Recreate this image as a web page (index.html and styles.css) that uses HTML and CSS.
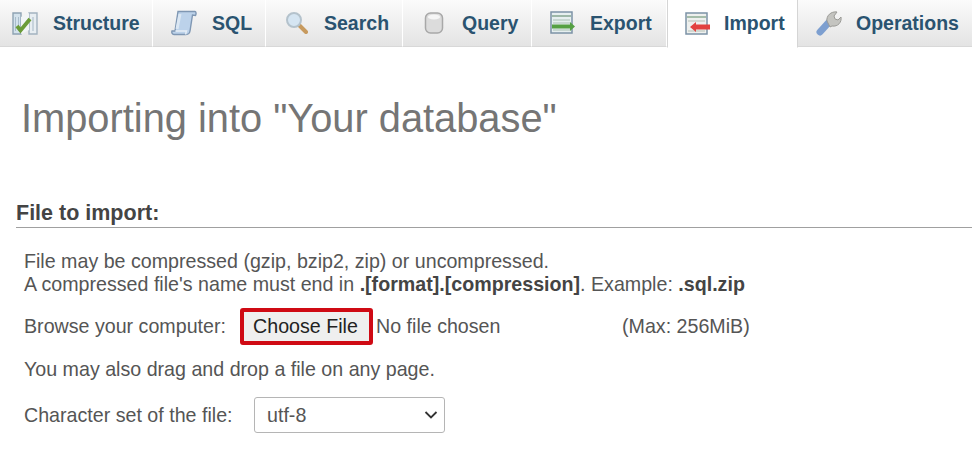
FILE: index.html
```html
<!DOCTYPE html>
<html lang="en">
<head>
    <meta charset="UTF-8">
    <title>Import</title>
    <link rel="stylesheet" href="styles.css">
</head>
<body>
    <ul class="tabs">
        <li class="tab tab-structure"><svg class="icon" viewBox="0 0 26 24">
            <path d="M1 2h8v21H1z" fill="#d3e2ec" stroke="#8ea3b3" stroke-width="1.400"/>
            <path d="M3.500 6v14M6.500 6v14" stroke="#a8bccb" stroke-width="1"/>
            <path d="M17 2h8v21h-8z" fill="#e8eef2" stroke="#a3b3c0" stroke-width="1.400"/>
            <path d="M21 6v14" stroke="#bccad4" stroke-width="1.500"/>
            <path d="M9 6l8-4v17l-8 4z" fill="#f2f5f6"/>
            <path d="M5 15l3.500 4.500L18 8" fill="none" stroke="#6b9c38" stroke-width="3.800"/>
        </svg>Structure</li>
        <li class="tab tab-sql"><svg class="icon" viewBox="0 0 26 26">
            <path d="M7 1.500h17c1 0 1.500 2 .5 4l-3-.5-2.500 16c-.3 2-1.500 3.500-4 3.500H3c-2 0-2.500-2-2-3.500h3z" fill="#bcd2ea" stroke="#7f97b3" stroke-width="1.400"/>
            <path d="M4.500 21h11c-.5 1-.5 2.500-1 3.500" fill="none" stroke="#e6eef6" stroke-width="1.400"/>
            <path d="M9 4l-3 15" fill="none" stroke="#dbe7f3" stroke-width="3"/>
        </svg>SQL</li>
        <li class="tab tab-search"><svg class="icon" viewBox="0 0 24 24">
            <path d="M14 14l7 7" stroke="#c79a5e" stroke-width="4" stroke-linecap="round"/>
            <circle cx="9" cy="9" r="7" fill="#d5e5f2" stroke="#b4c2cc" stroke-width="2"/>
        </svg>Search</li>
        <li class="tab tab-query"><svg class="icon" viewBox="0 0 20 24">
            <rect x="1.500" y="2" width="17" height="20" rx="5" fill="#dcdcdc" stroke="#a8a8a8" stroke-width="1.500"/>
            <ellipse cx="10" cy="6" rx="6" ry="2.500" fill="#f6f6f6"/>
        </svg>Query</li>
        <li class="tab tab-export"><svg class="icon" viewBox="0 0 26 24">
            <rect x="1" y="1" width="21" height="21" fill="#e6eff0" stroke="#7c93a6" stroke-width="1.500"/>
            <path d="M2 5h19" stroke="#9db8a8" stroke-width="2"/>
            <path d="M3 9h17M3 12h17M3 19h17" stroke="#a8bfb2" fill="none"/>
            <path d="M2 13.500h18V11l5 4.500-5 4.500v-2.500H2z" fill="#55a043"/>
        </svg>Export</li>
        <li class="tab tab-import active"><svg class="icon" viewBox="0 0 26 24">
            <rect x="1" y="1" width="21" height="21" fill="#eef0ee" stroke="#7c93a6" stroke-width="1.500"/>
            <path d="M2 5h19" stroke="#a5bdaa" stroke-width="2"/>
            <path d="M3 9h17M3 19h17" stroke="#b5c0b5" fill="none"/>
            <path d="M25 12.500H11V10l-6 5 6 5v-2.500h14z" fill="#e2423f"/>
        </svg>Import</li>
        <li class="tab tab-operations"><svg class="icon" viewBox="0 0 26 26">
            <path d="M4 22L14 11" stroke="#7d9fd0" stroke-width="7" stroke-linecap="round"/>
            <path d="M11 11c-1-5 4-10 10-9l-3 4 1 3 3 1 3-3c1 5-3 10-9 9l-2 1z" fill="#c4c4c0" stroke="#9a9a96"/>
        </svg>Operations</li>
    </ul>

    <h1 class="title">Importing into "Your database"</h1>

    <h2 class="section-title">File to import:</h2>

    <div class="section-body">
        <p class="hint">File may be compressed (gzip, bzip2, zip) or uncompressed.<br>
        A compressed file's name must end in <b>.[format].[compression]</b>. Example: <b>.sql.zip</b></p>

        <div class="row browse-row">
            <span class="browse-label">Browse your computer:</span>
            <span class="file-btn">Choose File</span>
            <span class="file-name">No file chosen</span>
            <span class="max-size">(Max: 256MiB)</span>
        </div>

        <p class="drag-note">You may also drag and drop a file on any page.</p>

        <div class="row charset-row">
            <span class="charset-label">Character set of the file:</span>
            <span class="select">utf-8
                <svg class="chevron" viewBox="0 0 14 8"><path d="M1.500 1l5.500 5.500L12.500 1" fill="none" stroke="#333" stroke-width="1.800"/></svg>
            </span>
        </div>
    </div>
</body>
</html>
```

FILE: styles.css
```css
html, body {
    margin: 0;
    padding: 0;
}
body {
    width: 972px;
    height: 453px;
    overflow: hidden;
    background: #fff;
    font-family: "Liberation Sans", Arial, sans-serif;
    color: #444;
}

.tabs {
    display: flex;
    list-style: none;
    margin: 0;
    padding: 0;
    height: 48px;
}
.tab {
    display: flex;
    align-items: center;
    height: 47px;
    box-sizing: border-box;
    font-size: 19.500px;
    font-weight: bold;
    color: #2a5370;
    background: linear-gradient(#fbfbfb, #e4e4e4);
    border-right: 1px solid #fff;
    border-bottom: 1px solid #d8d8d8;
    white-space: nowrap;
}
.tab.active {
    background: #fff;
    border: 1px solid #d5d5d5;
    border-top: none;
    height: 48px;
    border-bottom-color: #fff;
}
.icon {
    flex: none;
    filter: blur(0.4px);
}
.tab-structure { width: 153px; padding-left: 12px; }
.tab-structure .icon { width: 26px; height: 24px; margin-right: 15px; }
.tab-sql { width: 113px; padding-left: 18px; }
.tab-sql .icon { width: 26px; height: 26px; margin-right: 15px; }
.tab-search { width: 137px; padding-left: 19px; }
.tab-search .icon { width: 24px; height: 24px; margin-right: 15px; }
.tab-query { width: 129px; padding-left: 21px; }
.tab-query .icon { width: 20px; height: 24px; margin-right: 18px; }
.tab-export { width: 135px; padding-left: 18px; }
.tab-export .icon { width: 26px; height: 24px; margin-right: 14px; }
.tab-import { width: 131px; padding-left: 17px; }
.tab-import .icon { width: 26px; height: 24px; margin-right: 13px; }
.tab-operations { flex: 1; padding-left: 18px; border-right: none; }
.tab-operations .icon { width: 26px; height: 26px; margin-right: 14px; }

.title {
    margin: 47px 0 0 21px;
    font-size: 39.800px;
    line-height: 46px;
    font-weight: normal;
    color: #757575;
}

.section-title {
    margin: 61px 0 0 16px;
    padding-bottom: 3px;
    border-bottom: 1px solid #a0a0a0;
    font-size: 21.500px;
    line-height: 22px;
    font-weight: bold;
    color: #444;
}

.section-body {
    padding: 22px 0 0 24px;
    font-size: 19.650px;
    color: #555;
}
.section-body p {
    margin: 0;
    line-height: 23px;
}
.section-body b {
    color: #444;
}

.row {
    display: flex;
    align-items: center;
}
.browse-row {
    margin-top: 12px;
}
.browse-label {
    width: 216px;
}
.file-btn {
    box-sizing: border-box;
    width: 133px;
    height: 37px;
    padding-right: 2px;
    line-height: 29px;
    text-align: center;
    background: #efefef;
    color: #222;
    border: 4px solid #cf0a14;
    border-radius: 3px;
}
.file-name {
    margin-left: 3px;
    width: 246px;
}
.drag-note {
    margin-top: 13px !important;
}
.charset-row {
    margin-top: 16px;
}
.charset-label {
    width: 230px;
}
.select {
    box-sizing: border-box;
    display: flex;
    align-items: center;
    justify-content: space-between;
    width: 191px;
    height: 36px;
    padding: 0 6px 0 12px;
    background: #fff;
    border: 1px solid #b5b5b5;
    border-radius: 3px;
}
.chevron {
    width: 14px;
    height: 8px;
}
```
